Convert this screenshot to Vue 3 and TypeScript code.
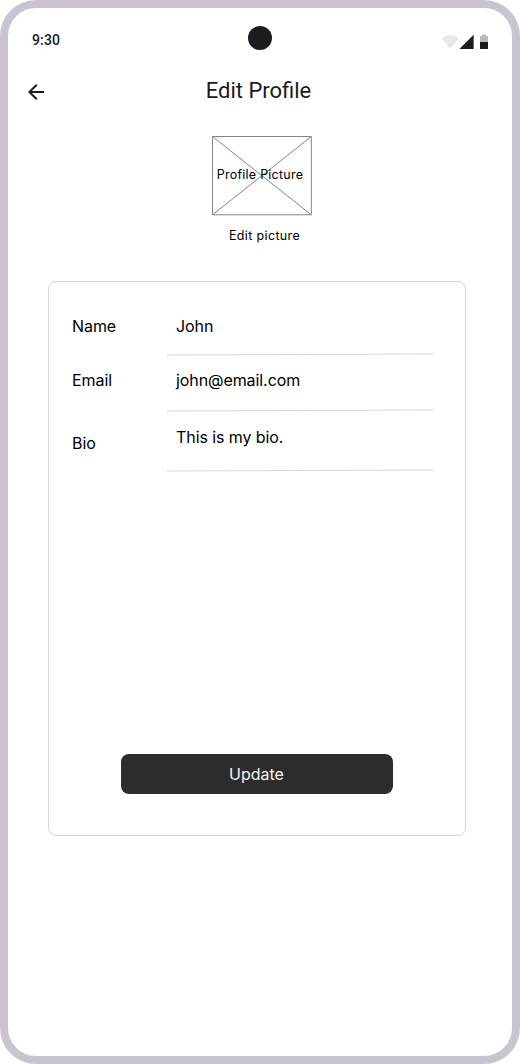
<script setup lang="ts">
interface Field {
  id: string
  label: string
  value: string
}

const fields: Field[] = [
  { id: 'name', label: 'Name', value: 'John' },
  { id: 'email', label: 'Email', value: 'john@email.com' },
  { id: 'bio', label: 'Bio', value: 'This is my bio.' },
]
</script>

<template>
  <main class="phone">
    <header class="status">
      <span class="time">9:30</span>
      <span class="camera"></span>
      <svg class="indicators" width="48" height="18" viewBox="0 0 48 18">
        <path d="M10 15.4 L1.9 5.4 C6.3 1.2 14.2 1.2 18.7 5.4 Z" fill="#e8e8e8" />
        <path d="M19.4 16 L33.6 1.8 V16 Z" fill="#1d1b20" />
        <path d="M40 9 V3 H42 V1.6 H46 V3 H48 V9 Z" fill="#bbbabc" />
        <path d="M40 9 H48 V16 H40 Z" fill="#1d1b20" />
      </svg>
    </header>

    <nav class="appbar">
      <svg class="back" width="24" height="24" viewBox="0 0 24 24">
        <path d="M7.825 13L13.425 18.6L12 20L4 12L12 4L13.425 5.4L7.825 11H20V13H7.825Z" fill="#1d1b20" />
      </svg>
      <h1 class="title">Edit Profile</h1>
    </nav>

    <section class="avatar">
      <div class="picture">
        <svg class="cross" width="100" height="80" viewBox="0 0 100 80">
          <path d="M0.5 0.5 H99.3 V78.8 H0.5 Z M0.5 0.5 L99.3 78.8 M99.3 0.5 L0.5 78.8" fill="none" stroke="#858585" />
        </svg>
        <span class="caption">Profile Picture</span>
      </div>
      <span class="edit">Edit picture</span>
    </section>

    <form class="card" @submit.prevent>
      <div v-for="field in fields" :key="field.id" class="row" :class="field.id">
        <span class="label">{{ field.label }}</span>
        <div class="entry">
          <span class="value">{{ field.value }}</span>
          <svg class="rule" width="266" height="3" viewBox="0 0 266 3">
            <line x1="0" y1="2" x2="266" y2="1" stroke="#d9d9d9" />
          </svg>
        </div>
      </div>
      <button class="update" type="submit">Update</button>
    </form>
  </main>
</template>

<style>
body {
  margin: 0;
  background: #fff;
}
</style>

<style scoped>
.phone {
  box-sizing: border-box;
  width: 520px;
  height: 1064px;
  border: 8px solid #cac4d0;
  border-radius: 36px;
  background: #fefefe;
  color: #000;
  font-family: Inter, sans-serif;
}

.status {
  display: grid;
  grid-template-columns: 1fr 24px 1fr;
  align-items: end;
  box-sizing: border-box;
  height: 52px;
  padding: 10px 24px;
}

.time {
  font: 500 14px/20px Roboto, sans-serif;
  letter-spacing: 0.14px;
  color: #1d1b20;
}

.camera {
  width: 24px;
  height: 24px;
  border-radius: 50%;
  background: #1d1b20;
}

.indicators {
  justify-self: end;
  margin-bottom: -1px;
}

.appbar {
  display: grid;
  grid-template-columns: 48px 1fr 48px;
  align-items: center;
  height: 64px;
  padding: 0 7px 0 4px;
}

.back {
  justify-self: center;
}

.title {
  margin: -2px 0 0;
  text-align: center;
  font: 400 22px/28px Roboto, sans-serif;
  color: #1d1b20;
}

.avatar {
  display: flex;
  flex-direction: column;
  align-items: center;
  height: 145px;
  padding: 12px 0 0 3px;
  box-sizing: border-box;
  margin-bottom: 12px;
}

.picture {
  display: grid;
  width: 100px;
  height: 80px;
}

.cross,
.caption {
  grid-area: 1 / 1;
}

.caption {
  place-self: center;
  margin: 0 3px 2px 0;
  white-space: nowrap;
  letter-spacing: 0.24px;
}

.caption,
.edit {
  font-size: 12.5px;
  line-height: 16px;
}

.edit {
  margin: 12px 0 0 6px;
  letter-spacing: 0.36px;
}

.card {
  display: flex;
  flex-direction: column;
  box-sizing: border-box;
  width: 418px;
  height: 555px;
  margin-left: 40px;
  padding: 16px 32px 41px 23px;
  border: 1px solid #d9d9d9;
  border-radius: 8px;
  font-size: 16px;
  line-height: 22px;
  letter-spacing: -0.08px;
}

.row {
  display: grid;
  grid-template-columns: 95px 266px;
}

.entry {
  display: flex;
  flex-direction: column;
  justify-content: space-between;
}

.value {
  padding-left: 9px;
}

.rule {
  display: block;
}

.name {
  height: 41px;
  padding-top: 17px;
}

.email {
  height: 43px;
  padding-top: 13px;
}

.bio {
  height: 46px;
  padding-top: 14px;
}

.bio .label {
  padding-top: 6px;
}

.update {
  width: 272px;
  height: 40px;
  margin: auto 0 0 49px;
  padding: 0 1px 0 0;
  border: 0;
  border-radius: 8px;
  background: #2c2c2c;
  color: #f5f5f5;
  font: 400 16px/22px Inter, sans-serif;
}
</style>
